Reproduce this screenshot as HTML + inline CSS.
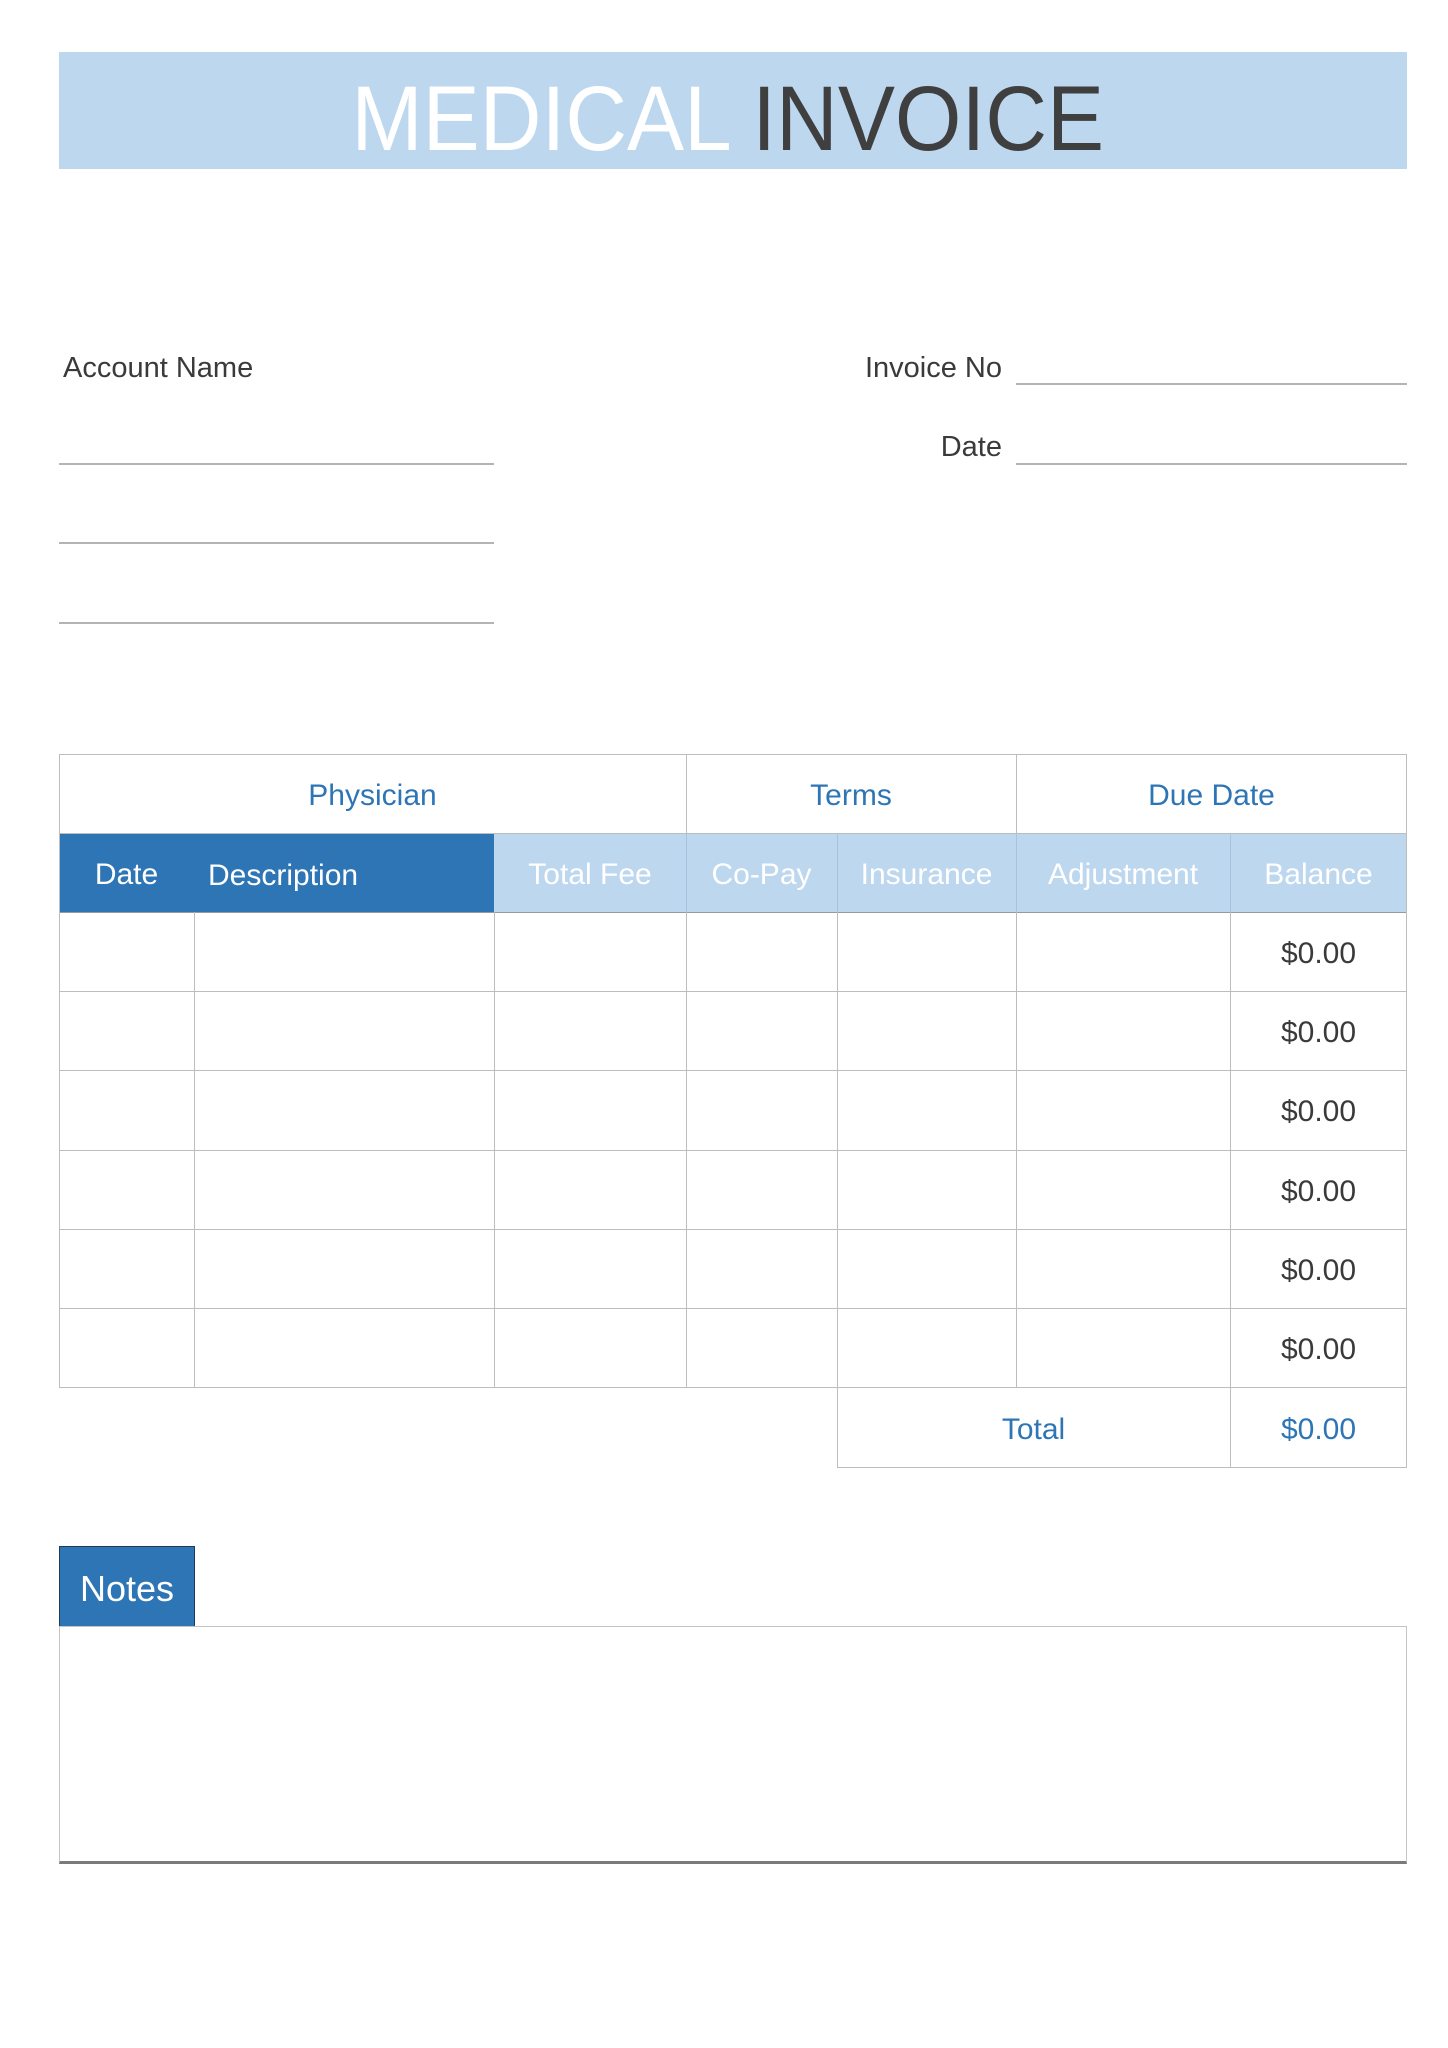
<!DOCTYPE html>
<html><head><meta charset="utf-8"><style>
*{margin:0;padding:0;box-sizing:border-box}
body{width:1448px;height:2048px;background:#fff;position:relative;font-family:"Liberation Sans",Arial,sans-serif;overflow:hidden}
.a{position:absolute}
.hl{position:absolute;height:0;border-top:2px solid #b4b4b4}
.vl{position:absolute;width:0;border-left:1.5px solid #bdbdbd}
.hr{position:absolute;height:0;border-top:1.5px solid #bdbdbd}
.c{position:absolute;display:flex;align-items:center;justify-content:center;font-size:30px;padding-top:5px}
</style></head><body>
<div class="a" style="left:59px;top:52px;width:1348px;height:117px;background:#bdd7ee"></div>
<div class="a" style="left:4px;top:60px;width:1448px;height:117px;display:flex;align-items:center;justify-content:center">
<span style="display:inline-block;font-size:92px;transform:scaleX(0.93);white-space:nowrap;line-height:1"><span style="color:#fff">MEDICAL</span> <span style="color:#3f3f3f">INVOICE</span></span></div>

<div class="a" style="left:63px;top:352px;font-size:29px;color:#3a3a3a">Account Name</div>
<div class="a" style="left:700px;top:352px;width:302px;text-align:right;font-size:29px;color:#3a3a3a">Invoice No</div>
<div class="a" style="left:700px;top:431px;width:302px;text-align:right;font-size:29px;color:#3a3a3a">Date</div>
<div class="hl" style="left:1016px;top:383px;width:391px"></div>
<div class="hl" style="left:1016px;top:463px;width:391px"></div>
<div class="hl" style="left:59px;top:463px;width:435px"></div>
<div class="hl" style="left:59px;top:542px;width:435px"></div>
<div class="hl" style="left:59px;top:622px;width:435px"></div>

<div class="a" style="left:59px;top:833px;width:435px;height:79px;background:#2e75b6"></div>
<div class="a" style="left:494px;top:833px;width:913px;height:79px;background:#bdd7ee"></div>
<div class="hr" style="left:59px;top:754px;width:1348px"></div>
<div class="hr" style="left:59px;top:833px;width:1348px"></div>
<div class="hr" style="left:59px;top:912px;width:1348px;border-top-color:#9a9a9a"></div>
<div class="hr" style="left:59px;top:991px;width:1348px"></div>
<div class="hr" style="left:59px;top:1070px;width:1348px"></div>
<div class="hr" style="left:59px;top:1150px;width:1348px"></div>
<div class="hr" style="left:59px;top:1229px;width:1348px"></div>
<div class="hr" style="left:59px;top:1308px;width:1348px"></div>
<div class="hr" style="left:59px;top:1387px;width:1348px"></div>
<div class="hr" style="left:837px;top:1467px;width:570px"></div>
<div class="vl" style="left:59px;top:754px;height:633px"></div>
<div class="vl" style="left:1406px;top:754px;height:713px"></div>
<div class="vl" style="left:686px;top:754px;height:79px"></div>
<div class="vl" style="left:1016px;top:754px;height:79px"></div>
<div class="vl" style="left:686px;top:833px;height:554px;border-left-color:#a9c3dc"></div>
<div class="vl" style="left:837px;top:833px;height:634px;border-left-color:#a9c3dc"></div>
<div class="vl" style="left:1016px;top:833px;height:554px;border-left-color:#a9c3dc"></div>
<div class="vl" style="left:1230px;top:833px;height:634px;border-left-color:#a9c3dc"></div>
<div class="vl" style="left:194px;top:912px;height:475px"></div>
<div class="vl" style="left:494px;top:912px;height:475px"></div>
<div class="vl" style="left:686px;top:912px;height:475px"></div>
<div class="vl" style="left:837px;top:912px;height:555px"></div>
<div class="vl" style="left:1016px;top:912px;height:475px"></div>
<div class="vl" style="left:1230px;top:912px;height:555px"></div>

<div class="c" style="left:59px;top:754px;width:627px;height:79px;color:#2e75b6">Physician</div>
<div class="c" style="left:686px;top:754px;width:330px;height:79px;color:#2e75b6">Terms</div>
<div class="c" style="left:1016px;top:754px;width:391px;height:79px;color:#2e75b6">Due Date</div>
<div class="c" style="left:59px;top:833px;width:135px;height:79px;color:#fff">Date</div>
<div class="a" style="left:208px;top:836px;height:79px;line-height:79px;font-size:30px;color:#fff">Description</div>
<div class="c" style="left:494px;top:833px;width:192px;height:79px;color:#fff">Total Fee</div>
<div class="c" style="left:686px;top:833px;width:151px;height:79px;color:#fff">Co-Pay</div>
<div class="c" style="left:837px;top:833px;width:179px;height:79px;color:#fff">Insurance</div>
<div class="c" style="left:1016px;top:833px;width:214px;height:79px;color:#fff">Adjustment</div>
<div class="c" style="left:1230px;top:833px;width:177px;height:79px;color:#fff">Balance</div>

<div class="c" style="left:1230px;top:912px;width:177px;height:79px;color:#3a3a3a">$0.00</div>
<div class="c" style="left:1230px;top:991px;width:177px;height:79px;color:#3a3a3a">$0.00</div>
<div class="c" style="left:1230px;top:1070px;width:177px;height:79px;color:#3a3a3a">$0.00</div>
<div class="c" style="left:1230px;top:1150px;width:177px;height:79px;color:#3a3a3a">$0.00</div>
<div class="c" style="left:1230px;top:1229px;width:177px;height:79px;color:#3a3a3a">$0.00</div>
<div class="c" style="left:1230px;top:1308px;width:177px;height:79px;color:#3a3a3a">$0.00</div>
<div class="c" style="left:837px;top:1387px;width:393px;height:80px;color:#2e75b6">Total</div>
<div class="c" style="left:1230px;top:1387px;width:177px;height:80px;color:#2e75b6">$0.00</div>

<div class="a" style="left:59px;top:1546px;width:136px;height:81px;background:#2e75b6;border:1.5px solid #1f3a56;color:#fff;font-size:36px;display:flex;align-items:center;justify-content:center;padding-top:4px">Notes</div>
<div class="a" style="left:59px;top:1626px;width:1348px;height:238px;border:1.5px solid #c4c4c4;border-bottom:3px solid #7a7a7a"></div>
</body></html>
